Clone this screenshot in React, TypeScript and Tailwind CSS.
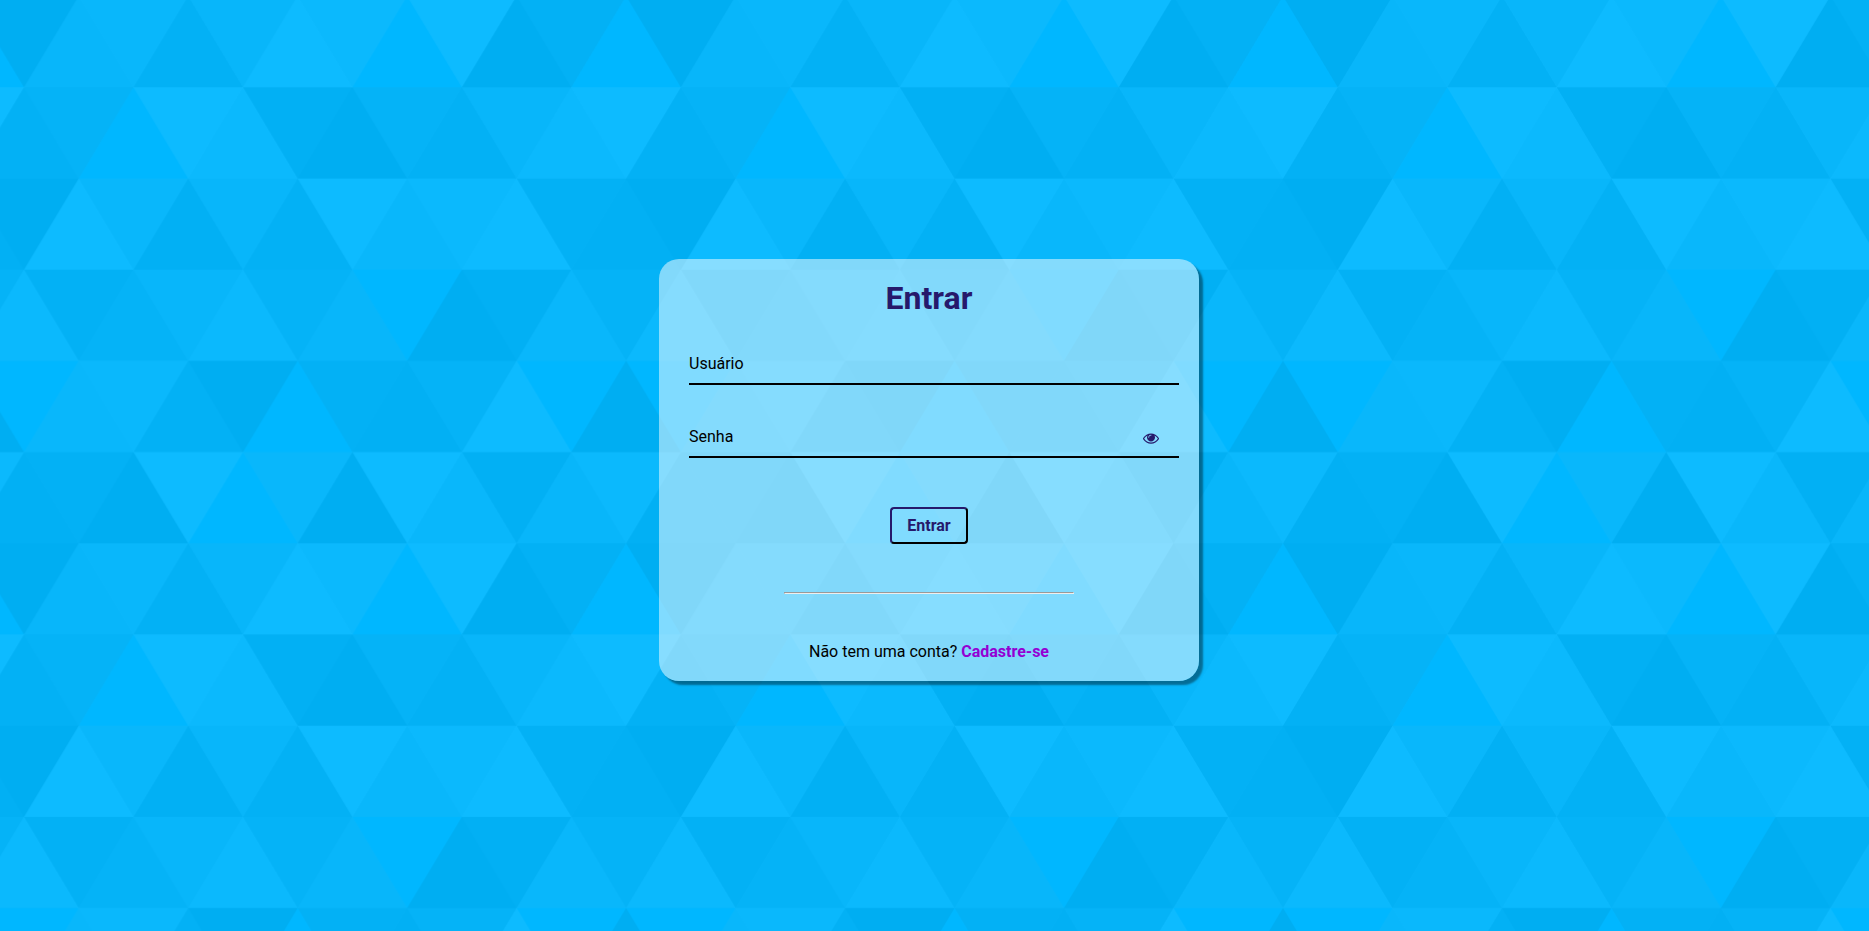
import { useState } from "react";

const TRIANGLE_WIDTH = 180;
const TRIANGLE_HEIGHT = 150;

type Row = { down: string; up: string };

// One hex digit per triangle gives its grey level; "-" leaves the base colour.
const ROWS: Row[] = [
  { down: "0a9df4", up: "93f-0-" },
  { down: "6f269f", up: "3-d03d" },
  { down: "0a9fd3", up: "f23af2" },
  { down: "396-26", up: "d6d90a" },
  { down: "-c036-", up: "a3-2f0" },
  { down: "3faf2d", up: "20-0a9" },
];

function rowTriangles(row: Row, index: number) {
  const top = index * TRIANGLE_HEIGHT;
  const bottom = top + TRIANGLE_HEIGHT;
  const shifted = index % 2 === 1;
  const half = TRIANGLE_WIDTH / 2;
  const shapes: { points: string; fill: string }[] = [];

  const add = (level: string, left: number, base: number, apex: number) => {
    if (level === "-") return;
    // The last triangle crosses the tile's edge, so it is drawn on both sides.
    [left, left - 6 * TRIANGLE_WIDTH].forEach((x) => {
      if (x + TRIANGLE_WIDTH > 0) {
        shapes.push({
          points: `${x} ${base} ${x + TRIANGLE_WIDTH} ${base} ${x + half} ${apex}`,
          fill: `#${level}${level}${level}`,
        });
      }
    });
  };

  for (let k = 0; k < 6; k += 1) {
    const aligned = k * TRIANGLE_WIDTH;
    add(row.down[k], shifted ? aligned + half : aligned, top, bottom);
    add(row.up[k], shifted ? aligned : aligned + half, bottom, top);
  }
  return shapes;
}

const TRIANGLES = ROWS.flatMap(rowTriangles);

function TriangleBackdrop() {
  return (
    <svg className="absolute inset-0 h-full w-full" aria-hidden="true">
      <defs>
        <pattern
          id="triangles"
          width="1080"
          height="900"
          patternUnits="userSpaceOnUse"
          patternTransform="translate(-30.7 -3.9) scale(0.6082 0.608)"
        >
          <g fillOpacity="0.05">
            {TRIANGLES.map((t, i) => (
              <polygon key={i} points={t.points} fill={t.fill} />
            ))}
          </g>
        </pattern>
      </defs>
      <rect width="100%" height="100%" fill="url(#triangles)" />
    </svg>
  );
}

function EyeIcon() {
  return (
    <svg viewBox="0 0 1792 1792" className="size-4 fill-current" aria-hidden="true">
      <path d="M1664 960q-152-236-381-353 61 104 61 225 0 185-131.5 316.5t-316.5 131.5-316.5-131.5-131.5-316.5q0-121 61-225-229 117-381 353 133 205 333.5 326.5t434.5 121.5 434.5-121.5 333.5-326.5zm-720-384q0-20-14-34t-34-14q-125 0-214.5 89.5t-89.5 214.5q0 20 14 34t34 14 34-14 14-34q0-86 61-147t147-61q20 0 34-14t14-34zm848 384q0 34-20 69-140 230-376.5 368.5t-499.5 138.5-499.5-139-376.5-368q-20-35-20-69t20-69q140-229 376.5-368t499.5-139 499.5 139 376.5 368q20 35 20 69z" />
    </svg>
  );
}

type FieldProps = {
  id: string;
  label: string;
  type: string;
  children?: React.ReactNode;
};

function Field({ id, label, type, children }: FieldProps) {
  return (
    <div className="relative">
      <input
        id={id}
        name={id}
        type={type}
        placeholder=" "
        className="peer block h-10 w-full border-b-2 border-black bg-transparent text-base text-black outline-none"
      />
      <label
        htmlFor={id}
        className="pointer-events-none absolute top-[7px] left-0 text-base text-black transition-all peer-focus:-top-4 peer-[:not(:placeholder-shown)]:-top-4"
      >
        {label}
      </label>
      {children}
    </div>
  );
}

export default function App() {
  const [visible, setVisible] = useState(false);

  return (
    <main className="relative flex min-h-screen items-center justify-center bg-[#00b7ff] pt-[9px] pr-[11px] font-['Roboto',sans-serif]">
      <TriangleBackdrop />
      <form
        onSubmit={(e) => e.preventDefault()}
        className="relative w-full max-w-[540px] rounded-[20px] bg-white/50 pt-[19px] pr-5 pb-[17px] pl-[30px] shadow-[4px_4px_2px_rgba(0,0,0,0.4)]"
      >
        <h1 className="pr-[10px] text-center text-[32px] leading-10 font-bold text-[#26196b]">
          Entrar
        </h1>
        <div className="mt-[27px] flex flex-col gap-[33px]">
          <Field id="usuario" label="Usuário" type="text" />
          <Field id="senha" label="Senha" type={visible ? "text" : "password"}>
            <button
              type="button"
              aria-label="Mostrar senha"
              onClick={() => setVisible(!visible)}
              className="absolute top-3 right-5 text-[#26196b]"
            >
              <EyeIcon />
            </button>
          </Field>
        </div>
        <div className="flex flex-col items-center pr-[10px]">
          <button
            type="submit"
            className="mt-[49px] h-[37px] w-[78px] rounded border-2 border-t-[#26196b] border-r-black border-b-black border-l-[#26196b] text-base font-bold text-[#26196b]"
          >
            Entrar
          </button>
          <hr className="mt-12 h-[2px] w-[290px] border border-t-[#9a9a9a] border-r-[#eeeeee] border-b-[#eeeeee] border-l-[#9a9a9a]" />
          <p className="mt-[46px] text-base text-black">
            Não tem uma conta?{" "}
            <a href="#cadastro" className="font-bold text-[#9400d3]">
              Cadastre-se
            </a>
          </p>
        </div>
      </form>
    </main>
  );
}
